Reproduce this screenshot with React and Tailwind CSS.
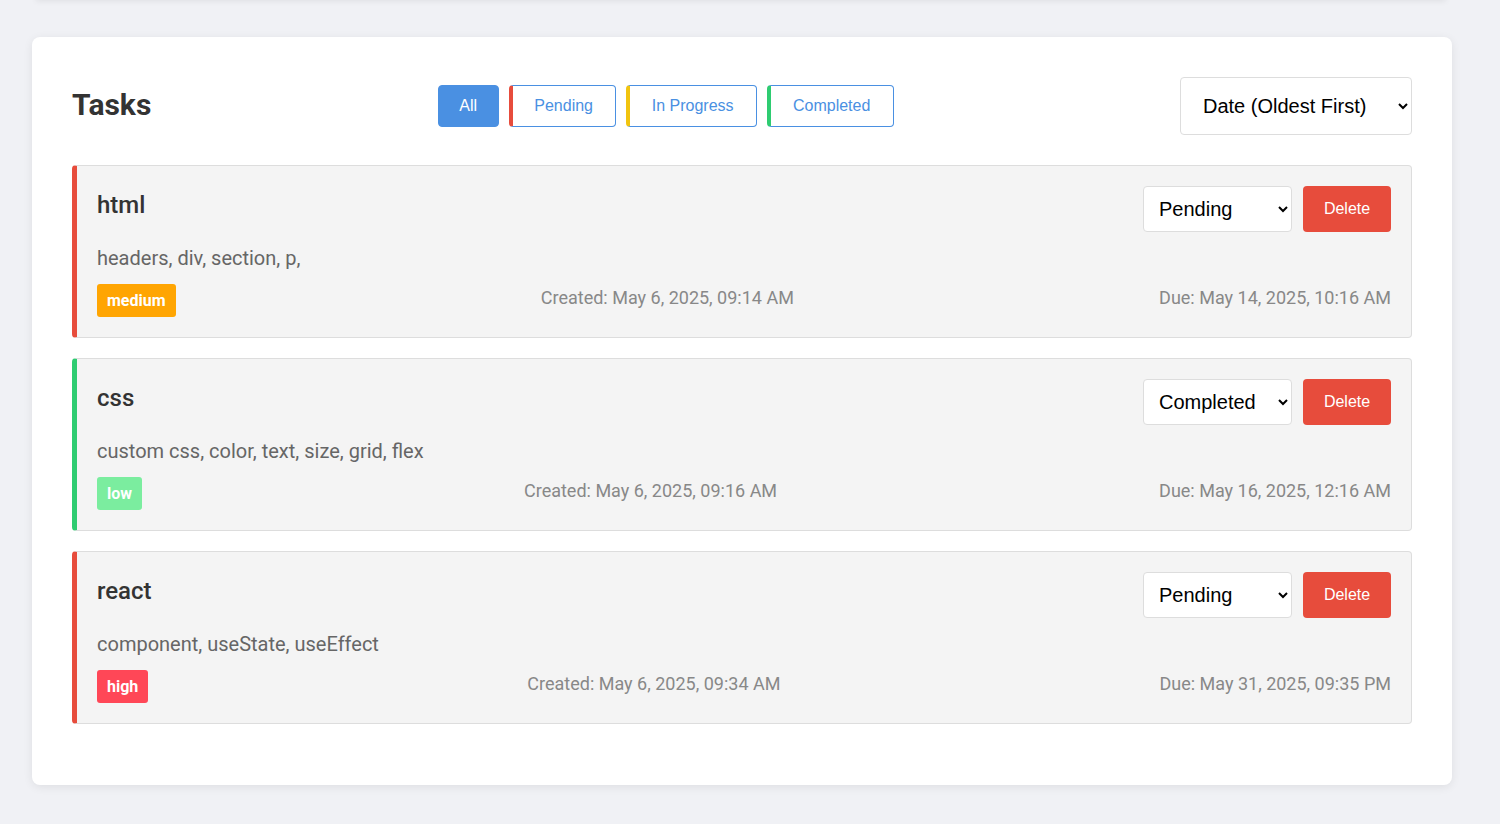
import React, { useState } from 'react';

const tasks = [
  {
    id: 1,
    title: 'html',
    description: 'headers, div, section, p,',
    priority: 'medium',
    status: 'Pending',
    created: 'May 6, 2025, 09:14 AM',
    due: 'May 14, 2025, 10:16 AM'
  },
  {
    id: 2,
    title: 'css',
    description: 'custom css, color, text, size, grid, flex',
    priority: 'low',
    status: 'Completed',
    created: 'May 6, 2025, 09:16 AM',
    due: 'May 16, 2025, 12:16 AM'
  },
  {
    id: 3,
    title: 'react',
    description: 'component, useState, useEffect',
    priority: 'high',
    status: 'Pending',
    created: 'May 6, 2025, 09:34 AM',
    due: 'May 31, 2025, 09:35 PM'
  }
];

const filters = [
  { label: 'All', edge: 'border-l-[#4a90e2]', width: 'w-[61px]' },
  { label: 'Pending', edge: 'border-l-[#e74c3c]', width: 'w-[107px]' },
  { label: 'In Progress', edge: 'border-l-[#f1c40f]', width: 'w-[131px]' },
  { label: 'Completed', edge: 'border-l-[#2ecc71]', width: 'w-[127px]' }
];

const priorityClass = {
  low: 'bg-[#7bed9f]',
  medium: 'bg-[#ffa502]',
  high: 'bg-[#ff4757]'
};

const TaskCard = ({ task }) => {
  const [status, setStatus] = useState(task.status);
  const edge = status === 'Completed' ? 'border-l-[#2ecc71]' : 'border-l-[#e74c3c]';

  return (
    <div className={`mb-[20px] rounded-[4px] border border-[#ddd] border-l-[5px] ${edge} bg-[#f4f4f4] p-[20px]`}>
      <div className="flex items-center justify-between">
        <h3 className="mb-[8px] text-[24px] font-medium leading-[30px] text-[#333]">{task.title}</h3>
        <div className="flex items-center gap-[11px]">
          <select
            value={status}
            onChange={(e) => setStatus(e.target.value)}
            className="h-[46px] w-[149px] rounded-[4px] border border-[#ddd] bg-white px-[11px] font-['Liberation_Sans',Arial,sans-serif] text-[20px] text-black"
          >
            <option>Pending</option>
            <option>In Progress</option>
            <option>Completed</option>
          </select>
          <button className="h-[46px] w-[88px] rounded-[4px] bg-[#e74c3c] font-['Liberation_Sans',Arial,sans-serif] text-[16px] text-white">
            Delete
          </button>
        </div>
      </div>
      <p className="mt-[12px] mb-[12px] text-[20px] leading-[28px] text-[#666]">{task.description}</p>
      <div className="flex justify-between text-[18px] leading-[27px] text-[#888]">
        <span className={`rounded-[3px] px-[10px] py-[5px] text-[16px] font-bold leading-[23px] text-white ${priorityClass[task.priority]}`}>
          {task.priority}
        </span>
        <span>Created: {task.created}</span>
        <span>Due: {task.due}</span>
      </div>
    </div>
  );
};

export default function App() {
  const [active, setActive] = useState('All');

  return (
    <div className="min-h-screen bg-[#f0f1f5] font-['Roboto',sans-serif] overflow-hidden">
      <div className="-mt-[20px] ml-[36px] h-[20px] w-[1410px] bg-white shadow-[0_1px_6px_rgba(0,0,0,0.08)]" />
      <div className="ml-[32px] mt-[37px] w-[1420px] rounded-[8px] bg-white px-[40px] pt-[40px] pb-[41px] shadow-[0_2px_10px_rgba(0,0,0,0.08)]">
        <div className="mb-[30px] flex items-center justify-between">
          <h2 className="-mt-[3px] text-[30px] font-bold leading-[36px] text-[#333]">Tasks</h2>
          <div className="flex gap-[10px]">
            {filters.map((f) => (
              <button
                key={f.label}
                onClick={() => setActive(f.label)}
                className={`h-[42px] rounded-[4px] border border-[#4a90e2] text-center font-['Liberation_Sans',Arial,sans-serif] text-[16px] ${f.width} ${
                  active === f.label
                    ? 'bg-[#4a90e2] text-white'
                    : `border-l-4 bg-white text-[#4a90e2] ${f.edge}`
                }`}
              >
                {f.label}
              </button>
            ))}
          </div>
          <select className="h-[58px] w-[232px] rounded-[4px] border border-[#ddd] bg-white px-[18px] font-['Liberation_Sans',Arial,sans-serif] text-[20px] text-black">
            <option>Date (Oldest First)</option>
            <option>Date (Newest First)</option>
            <option>Priority</option>
          </select>
        </div>
        {tasks.map((t) => (
          <TaskCard key={t.id} task={t} />
        ))}
      </div>
    </div>
  );
}
